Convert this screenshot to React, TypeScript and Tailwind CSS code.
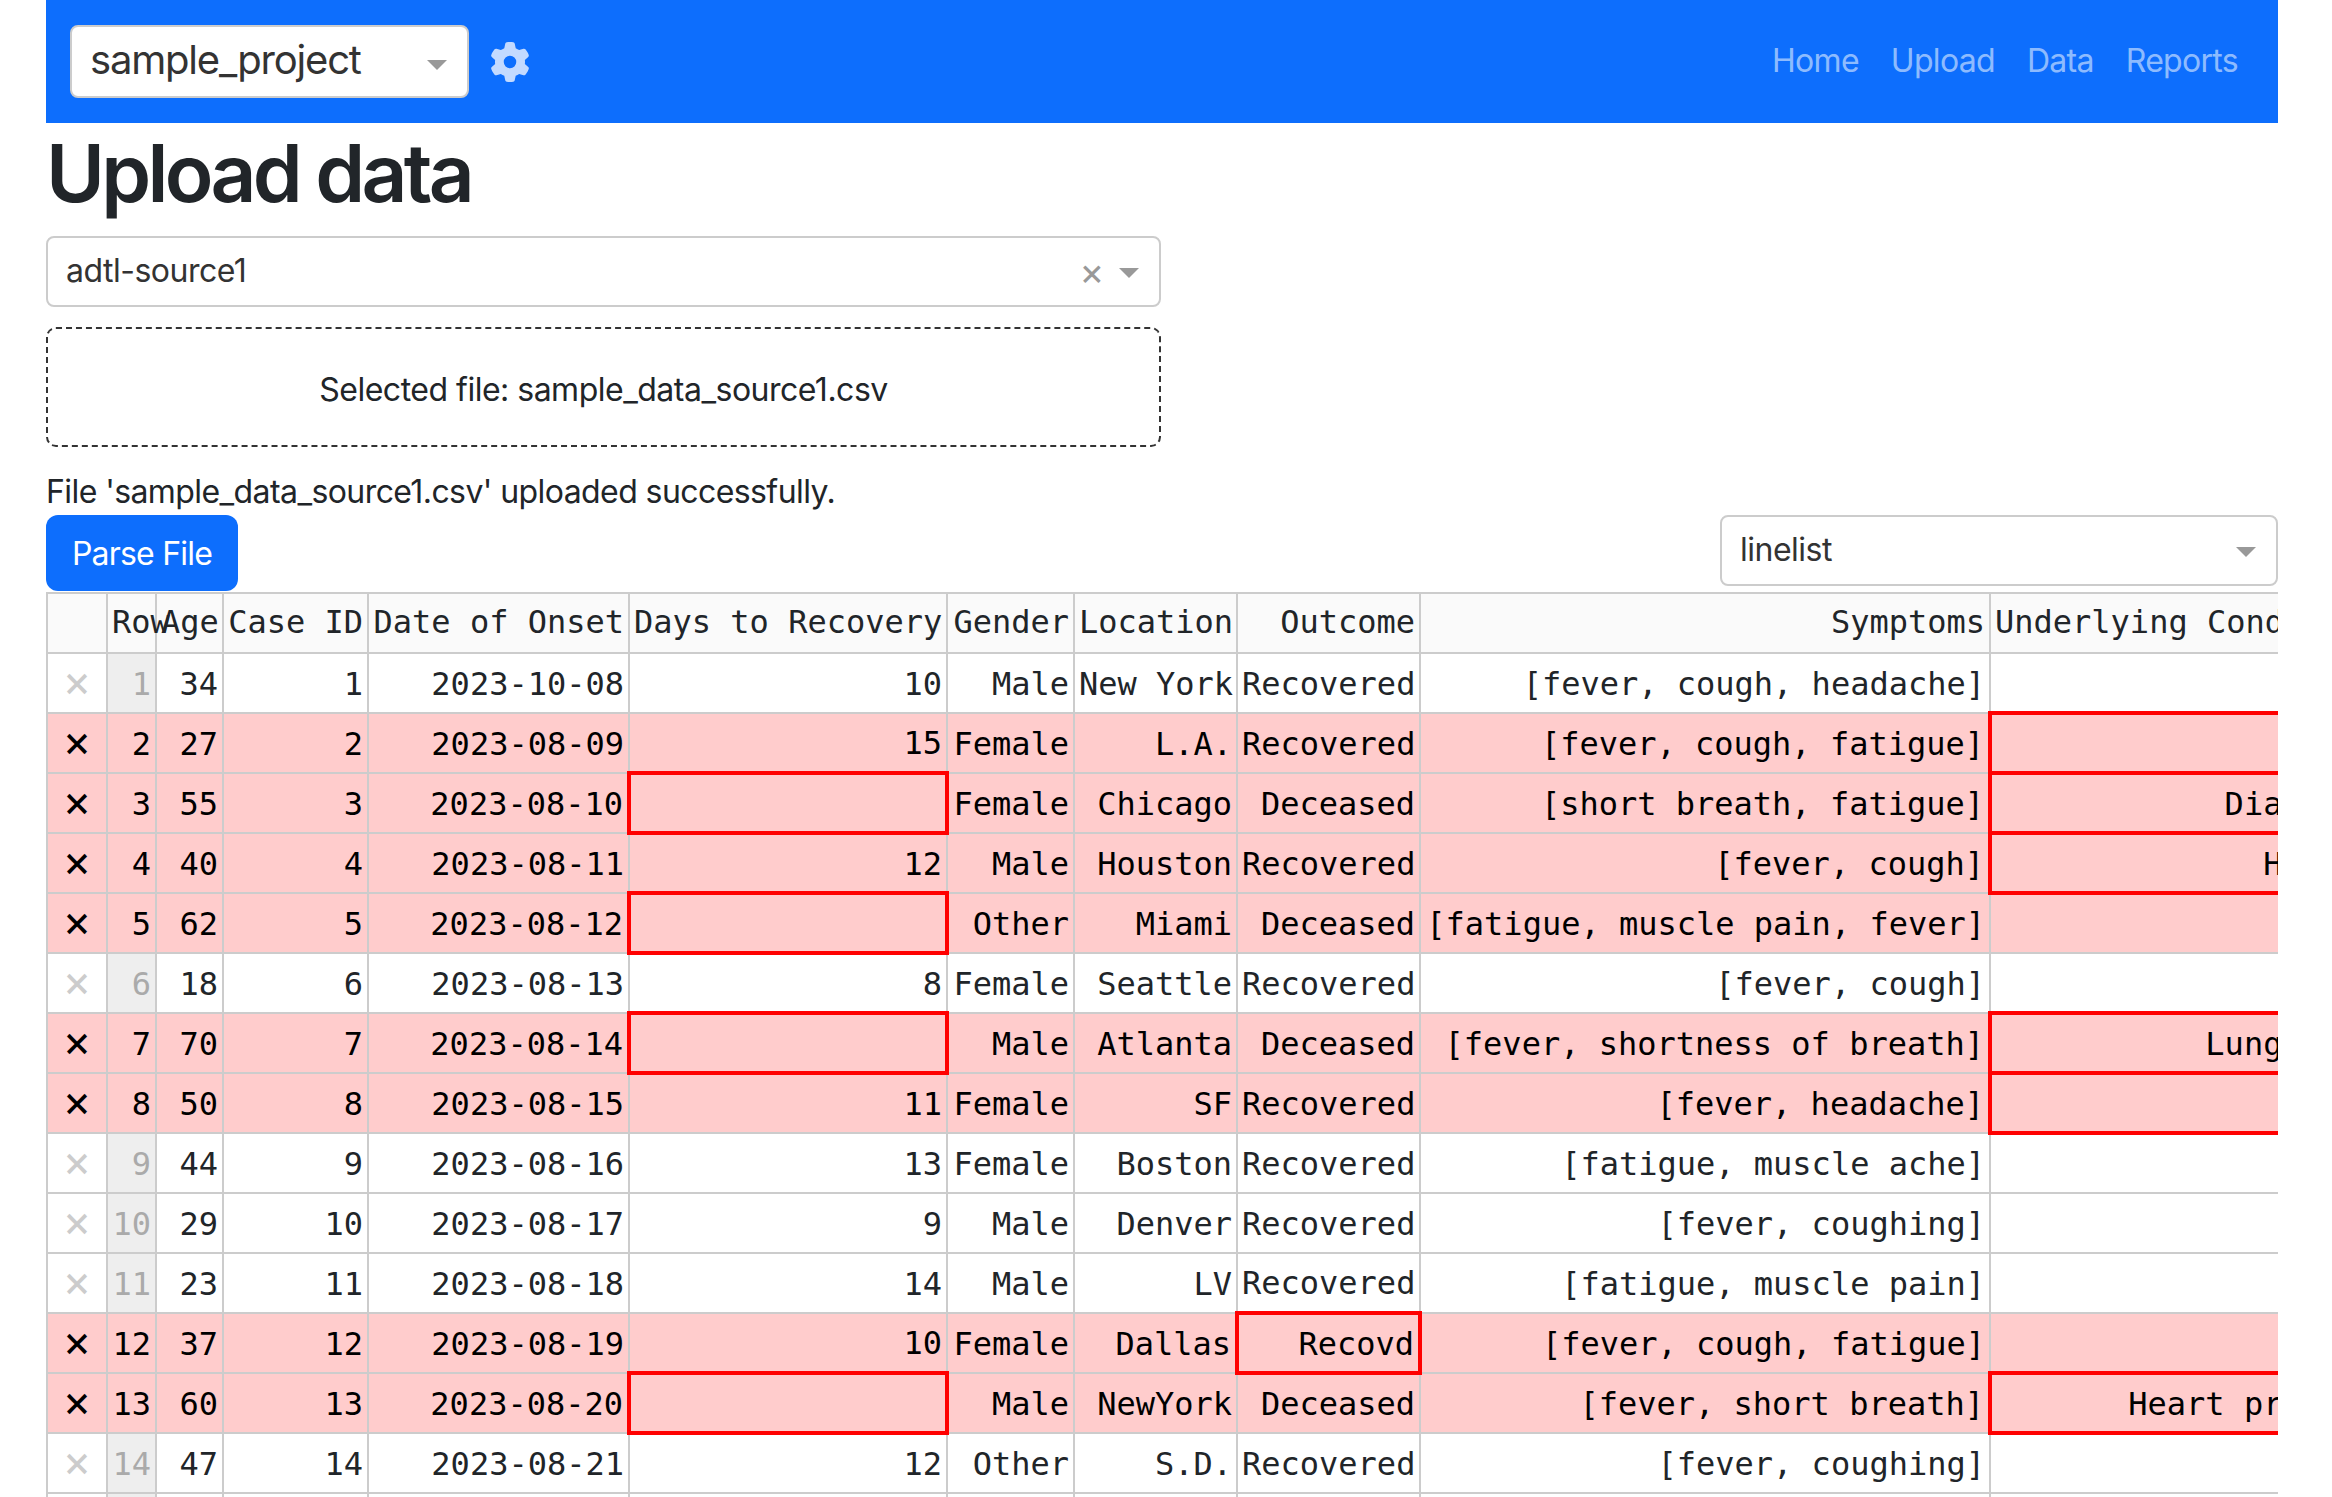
import { FaGear } from "react-icons/fa6";

type Row = {
  id: number;
  age: number;
  date: string;
  days?: number;
  gender: string;
  location: string;
  outcome: string;
  symptoms: string;
  cond?: string;
  badDays?: boolean;
  badOutcome?: boolean;
  badCond?: boolean;
  error?: boolean;
};

const rows: Row[] = [
  { id: 1, age: 34, date: "2023-10-08", days: 10, gender: "Male", location: "New York", outcome: "Recovered", symptoms: "[fever, cough, headache]" },
  { id: 2, age: 27, date: "2023-08-09", days: 15, gender: "Female", location: "L.A.", outcome: "Recovered", symptoms: "[fever, cough, fatigue]", badCond: true, error: true },
  { id: 3, age: 55, date: "2023-08-10", gender: "Female", location: "Chicago", outcome: "Deceased", symptoms: "[short breath, fatigue]", cond: "Diabetics", badDays: true, badCond: true, error: true },
  { id: 4, age: 40, date: "2023-08-11", days: 12, gender: "Male", location: "Houston", outcome: "Recovered", symptoms: "[fever, cough]", cond: "High BP", badCond: true, error: true },
  { id: 5, age: 62, date: "2023-08-12", gender: "Other", location: "Miami", outcome: "Deceased", symptoms: "[fatigue, muscle pain, fever]", badDays: true, error: true },
  { id: 6, age: 18, date: "2023-08-13", days: 8, gender: "Female", location: "Seattle", outcome: "Recovered", symptoms: "[fever, cough]" },
  { id: 7, age: 70, date: "2023-08-14", gender: "Male", location: "Atlanta", outcome: "Deceased", symptoms: "[fever, shortness of breath]", cond: "Lung issue", badDays: true, badCond: true, error: true },
  { id: 8, age: 50, date: "2023-08-15", days: 11, gender: "Female", location: "SF", outcome: "Recovered", symptoms: "[fever, headache]", badCond: true, error: true },
  { id: 9, age: 44, date: "2023-08-16", days: 13, gender: "Female", location: "Boston", outcome: "Recovered", symptoms: "[fatigue, muscle ache]" },
  { id: 10, age: 29, date: "2023-08-17", days: 9, gender: "Male", location: "Denver", outcome: "Recovered", symptoms: "[fever, coughing]" },
  { id: 11, age: 23, date: "2023-08-18", days: 14, gender: "Male", location: "LV", outcome: "Recovered", symptoms: "[fatigue, muscle pain]" },
  { id: 12, age: 37, date: "2023-08-19", days: 10, gender: "Female", location: "Dallas", outcome: "Recovd", symptoms: "[fever, cough, fatigue]", badOutcome: true, error: true },
  { id: 13, age: 60, date: "2023-08-20", gender: "Male", location: "NewYork", outcome: "Deceased", symptoms: "[fever, short breath]", cond: "Heart problems", badDays: true, badCond: true, error: true },
  { id: 14, age: 47, date: "2023-08-21", days: 12, gender: "Other", location: "S.D.", outcome: "Recovered", symptoms: "[fever, coughing]" },
  { id: 15, age: 52, date: "2023-08-22", days: 10, gender: "Male", location: "Austin", outcome: "Recovered", symptoms: "[fever, cough]" },
];

const headers = [
  "Row",
  "Age",
  "Case ID",
  "Date of Onset",
  "Days to Recovery",
  "Gender",
  "Location",
  "Outcome",
  "Symptoms",
  "Underlying Conditions",
];

const cell = "border-2 border-[#ccc] px-1 pt-[1px] text-right whitespace-nowrap";
const badCell = "border-4 border-[#f00] px-1 pt-[1px] text-right whitespace-nowrap";

function Caret() {
  return <span className="block h-0 w-0 border-x-10 border-t-10 border-x-transparent border-t-[#999]" />;
}

function Select({ label, clearable }: { label: string; clearable?: boolean }) {
  return (
    <div className="flex h-[71px] items-center justify-between rounded-lg border-2 border-[#ccc] bg-white pr-[20px] pl-[18px] text-[#333]">
      <span className="pb-[1px]">{label}</span>
      <span className="flex items-center gap-[15px] pt-[2px]">
        {clearable && <span className="pb-[4px] text-[38px] leading-none text-[#999]">×</span>}
        <Caret />
      </span>
    </div>
  );
}

export default function App() {
  return (
    <div className="h-[1497px] overflow-hidden bg-white pr-[54px] pl-[46px] font-['Inter',sans-serif] text-[32px] tracking-[-0.5px] text-[#212529]">
      {/* navbar */}
      <nav className="flex h-[123px] items-center justify-between bg-[#0d6efd] pr-[40px] pl-[24px]">
        <div className="flex items-center gap-[21px]">
          <div className="flex h-[73px] w-[399px] items-center justify-between rounded-lg border-2 border-[#ccc] bg-white pr-[20px] pb-[4px] pl-[18px] text-[40px] tracking-[-1.2px] text-[#333]">
            <span>sample_project</span>
            <span className="mt-[10px]">
              <Caret />
            </span>
          </div>
          <FaGear className="text-[#c3daff]" size={40} />
        </div>
        <div className="flex gap-[32px] pb-[2px] tracking-[-0.7px] text-[#ffffff8c]">
          <span>Home</span>
          <span>Upload</span>
          <span>Data</span>
          <span>Reports</span>
        </div>
      </nav>

      <h1 className="mt-[2px] mb-[15px] text-[80px] leading-[96px] font-semibold tracking-[-3.7px]">Upload data</h1>

      <div className="w-[1115px]">
        <Select label="adtl-source1" clearable />
        <div className="mt-[20px] flex h-[120px] items-center justify-center rounded-[10px] border-2 border-dashed border-[#333] pt-[6px]">
          Selected file: sample_data_source1.csv
        </div>
      </div>

      <p className="mt-[25px] leading-[40px] tracking-[-0.58px]">File 'sample_data_source1.csv' uploaded successfully.</p>

      <div className="mt-[3px] flex items-start justify-between">
        <button className="h-[76px] w-[192px] rounded-xl bg-[#0d6efd] pt-[2px] tracking-[-0.8px] text-white">Parse File</button>
        <div className="w-[558px]">
          <Select label="linelist" />
        </div>
      </div>

      {/* data table */}
      <div className="mt-[1px] overflow-hidden">
        <table className="w-[2357px] table-fixed border-collapse font-['DejaVu_Sans_Mono',monospace] text-[32px] tracking-normal">
          <colgroup>
            <col className="w-[60px]" />
            <col className="w-[49px]" />
            <col className="w-[67px]" />
            <col className="w-[145px]" />
            <col className="w-[261px]" />
            <col className="w-[318px]" />
            <col className="w-[127px]" />
            <col className="w-[163px]" />
            <col className="w-[183px]" />
            <col className="w-[570px]" />
            <col className="w-[414px]" />
          </colgroup>
          <thead>
            <tr className="h-[60px] bg-[#fafafa]">
              <th className="border-2 border-[#ccc]" />
              {headers.map((h) => (
                <th key={h} className="border-2 border-[#ccc] px-1 pb-[2px] text-right font-normal whitespace-nowrap">
                  {h}
                </th>
              ))}
            </tr>
          </thead>
          <tbody>
            {rows.map((r) => (
              <tr key={r.id} className={r.error ? "h-[60px] bg-[#fcc] text-black" : "h-[60px]"}>
                <td className={`border-2 border-[#ccc] text-center text-[44px] leading-none ${r.error ? "text-black" : "text-[#ccc]"}`}>×</td>
                <td className={`${cell} ${r.error ? "" : "bg-[#eee] text-[#aaa]"}`}>{r.id}</td>
                <td className={cell}>{r.age}</td>
                <td className={cell}>{r.id}</td>
                <td className={cell}>{r.date}</td>
                <td className={r.badDays ? badCell : cell}>{r.days}</td>
                <td className={cell}>{r.gender}</td>
                <td className={cell}>{r.location}</td>
                <td className={r.badOutcome ? badCell : cell}>{r.outcome}</td>
                <td className={cell}>{r.symptoms}</td>
                <td className={r.badCond ? badCell : cell}>{r.cond}</td>
              </tr>
            ))}
          </tbody>
        </table>
      </div>
    </div>
  );
}
